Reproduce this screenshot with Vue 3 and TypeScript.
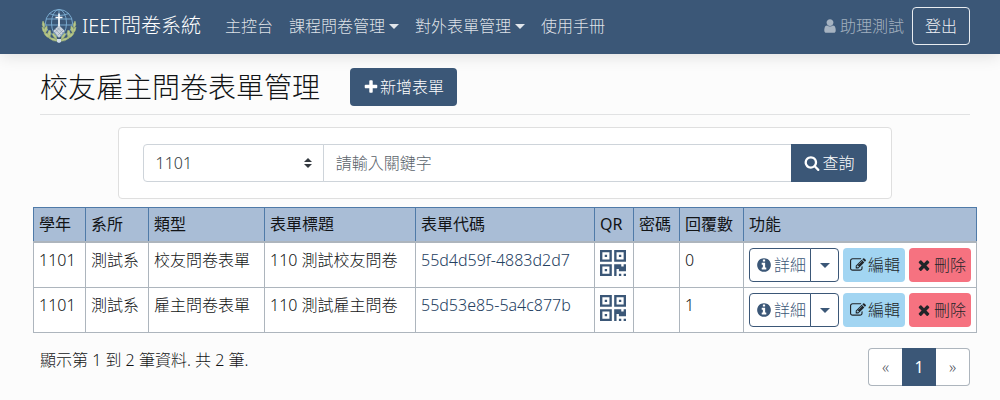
<script setup lang="ts">
import { ref } from 'vue'

interface FormRow {
  year: string
  dept: string
  kind: string
  title: string
  code: string
  replies: number
}

const icons = {
  user: 'M1536 1399q0 109-62.5 187t-150.5 78h-854q-88 0-150.5-78t-62.5-187q0-85 8.5-160.5t31.5-152 58.5-131 94-89 134.5-34.5q131 128 313 128t313-128q76 0 134.5 34.5t94 89 58.5 131 31.5 152 8.5 160.5zm-256-887q0 159-112.5 271.5t-271.5 112.5-271.5-112.5-112.5-271.5 112.5-271.5 271.5-112.5 271.5 112.5 112.5 271.5z',
  plus: 'M1600 736v192q0 40-28 68t-68 28h-416v416q0 40-28 68t-68 28h-192q-40 0-68-28t-28-68v-416h-416q-40 0-68-28t-28-68v-192q0-40 28-68t68-28h416v-416q0-40 28-68t68-28h192q40 0 68 28t28 68v416h416q40 0 68 28t28 68z',
  search: 'M1216 832q0-185-131.5-316.5t-316.5-131.5-316.5 131.5-131.5 316.5 131.5 316.5 316.5 131.5 316.5-131.5 131.5-316.5zm512 832q0 52-38 90t-90 38q-54 0-90-38l-343-342q-179 124-399 124-143 0-273.5-55.5t-225-150-150-225-55.5-273.5 55.5-273.5 150-225 225-150 273.5-55.5 273.5 55.5 225 150 150 225 55.5 273.5q0 220-124 399l343 343q37 37 37 90z',
  info: 'M1152 1376v-160q0-14-9-23t-23-9h-96v-512q0-14-9-23t-23-9h-320q-14 0-23 9t-9 23v160q0 14 9 23t23 9h96v320h-96q-14 0-23 9t-9 23v160q0 14 9 23t23 9h448q14 0 23-9t9-23zm-128-896v-160q0-14-9-23t-23-9h-192q-14 0-23 9t-9 23v160q0 14 9 23t23 9h192q14 0 23-9t9-23zm640 416q0 209-103 385.5t-279.5 279.5-385.5 103-385.5-103-279.5-279.5-103-385.5 103-385.5 279.5-279.5 385.5-103 385.5 103 279.5 279.5 103 385.5z',
  edit: 'M888 1184l116-116-152-152-116 116v56h96v96h56zm440-720q-16-16-33 1l-350 350q-17 17-1 33t33-1l350-350q17-17 1-33zm80 594v190q0 119-84.5 203.5t-203.5 84.5h-832q-119 0-203.5-84.5t-84.5-203.5v-832q0-119 84.5-203.5t203.5-84.5h832q63 0 117 25 15 7 18 23 3 17-9 29l-49 49q-14 14-32 8-23-6-45-6h-832q-66 0-113 47t-47 113v832q0 66 47 113t113 47h832q66 0 113-47t47-113v-126q0-13 9-22l64-64q15-15 35-7t20 29zm-96-738l288 288-672 672h-288v-288zm444 132l-92 92-288-288 92-92q28-28 68-28t68 28l152 152q28 28 28 68t-28 68z',
  times: 'M1490 1322q0 40-28 68l-136 136q-28 28-68 28t-68-28l-294-294-294 294q-28 28-68 28t-68-28l-136-136q-28-28-28-68t28-68l294-294-294-294q-28-28-28-68t28-68l136-136q28-28 68-28t68 28l294 294 294-294q28-28 68-28t68 28l136 136q28 28 28 68t-28 68l-294 294 294 294q28 28 28 68z',
}

const navItems = [
  { label: '主控台', menu: false },
  { label: '課程問卷管理', menu: true },
  { label: '對外表單管理', menu: true },
  { label: '使用手冊', menu: false },
]

const columns = [
  { label: '學年', cls: 'c-year' },
  { label: '系所', cls: 'c-dept' },
  { label: '類型', cls: 'c-kind' },
  { label: '表單標題', cls: 'c-title' },
  { label: '表單代碼', cls: 'c-code' },
  { label: 'QR', cls: 'c-qr' },
  { label: '密碼', cls: 'c-pass' },
  { label: '回覆數', cls: 'c-reply' },
  { label: '功能', cls: 'c-tools' },
]

const rows: FormRow[] = [
  { year: '1101', dept: '測試系', kind: '校友問卷表單', title: '110 測試校友問卷', code: '55d4d59f-4883d2d7', replies: 0 },
  { year: '1101', dept: '測試系', kind: '雇主問卷表單', title: '110 測試雇主問卷', code: '55d53e85-5a4c877b', replies: 1 },
]

const year = ref('1101')
const keyword = ref('')
</script>

<template>
  <div class="page">
    <header class="navbar">
      <a class="brand" href="#">
        <svg class="logo" viewBox="0 0 36 36" aria-hidden="true">
          <g fill="none" stroke="#7eb0d6" stroke-width="0.9">
            <circle cx="18" cy="15" r="13.5" />
            <ellipse cx="18" cy="15" rx="7.5" ry="13.5" />
            <path d="M18 1.5v27M5 11h26M4.5 17h27M8 5.500q10 4 20 0" />
          </g>
          <g fill="#b8c88a" stroke="#a3b57a" stroke-width="0.6">
            <path d="M2 13q-2 4 1 7q2-3-1-7zM1 19q0 5 4 7q0-5-4-7zM3 25q2 5 7 5q-2-5-7-5zM8 30q4 4 9 3q-4-4-9-3zM6 18q-4 2-2 7q3-2 2-7zM9 22q-4 3-1 7q3-2 1-7zM12 25q-2 2 4 7q0-4-4-7z" />
            <path transform="matrix(-1 0 0 1 36 0)" d="M2 13q-2 4 1 7q2-3-1-7zM1 19q0 5 4 7q0-5-4-7zM3 25q2 5 7 5q-2-5-7-5zM8 30q4 4 9 3q-4-4-9-3zM6 18q-4 2-2 7q3-2 2-7zM9 22q-4 3-1 7q3-2 1-7zM12 25q-2 2 4 7q0-4-4-7z" />
          </g>
          <path d="M18 17l6 6-6 7-6-7z" fill="#c9d2dc" stroke="#4b6482" stroke-width="0.4" />
          <path d="M14 21l6 6M16 19.500l6 5.500M14 24.500l5-5M17 27l5-5" stroke="#7d90a6" stroke-width="0.5" />
          <path d="M18 5.500v12.500M14.500 9.500h7" stroke="#fff" stroke-width="1.600" />
          <path d="M16 31h4v3l-2 1-2-1z" fill="#cfdce8" />
        </svg>
        <span>IEET問卷系統</span>
      </a>
      <nav class="menu">
        <a v-for="item in navItems" :key="item.label" class="nav-link" href="#">
          {{ item.label }}<i v-if="item.menu" class="caret"></i>
        </a>
      </nav>
      <span class="account">
        <svg class="icon" viewBox="0 0 1792 1792" aria-hidden="true"><path :d="icons.user" /></svg>
        助理測試
      </span>
      <button class="btn logout" type="button">登出</button>
    </header>

    <main class="content">
      <div class="heading">
        <h1>校友雇主問卷表單管理</h1>
        <button class="btn primary" type="button">
          <svg class="icon" viewBox="0 0 1792 1792" aria-hidden="true"><path :d="icons.plus" /></svg>
          新增表單
        </button>
      </div>

      <form class="search" @submit.prevent>
        <div class="select-wrap">
          <select v-model="year" aria-label="學年">
            <option value="1101">1101</option>
          </select>
          <svg class="arrows" viewBox="0 0 8 10" aria-hidden="true"><path d="M4 0L0 4h8zM4 10L0 6h8z" /></svg>
        </div>
        <input v-model="keyword" type="text" placeholder="請輸入關鍵字" aria-label="關鍵字" />
        <button class="btn primary submit" type="submit">
          <svg class="icon" viewBox="0 0 1792 1792" aria-hidden="true"><path :d="icons.search" /></svg>
          查詢
        </button>
      </form>

      <table class="forms">
        <thead>
          <tr>
            <th v-for="col in columns" :key="col.label" :class="col.cls" scope="col">{{ col.label }}</th>
          </tr>
        </thead>
        <tbody>
          <tr v-for="row in rows" :key="row.code">
            <td>{{ row.year }}</td>
            <td>{{ row.dept }}</td>
            <td>{{ row.kind }}</td>
            <td>{{ row.title }}</td>
            <td><a class="code" href="#">{{ row.code }}</a></td>
            <td>
              <a class="qr-link" href="#" aria-label="QR">
                <svg class="qr" viewBox="0 0 11 11" aria-hidden="true">
                  <path fill-rule="evenodd" d="M0 0h5v5H0zM1 1v3h3V1zM6 0h5v5H6zM7 1v3h3V1zM0 6h5v5H0zM1 7v3h3V7z" />
                  <path d="M2 2h1v1H2zM8 2h1v1H8zM2 8h1v1H2zM6 6h3v1h1V6h1v3H8V8H7v3H6zM8 10h1v1H8zM10 10h1v1h-1z" />
                </svg>
              </a>
            </td>
            <td></td>
            <td>{{ row.replies }}</td>
            <td>
              <div class="tools">
                <div class="split">
                  <button class="btn small detail" type="button">
                    <svg class="icon" viewBox="0 0 1792 1792" aria-hidden="true"><path :d="icons.info" /></svg>
                    詳細
                  </button>
                  <button class="btn small toggle" type="button" aria-label="更多"><i class="caret"></i></button>
                </div>
                <button class="btn small edit" type="button">
                  <svg class="icon" viewBox="0 0 1792 1792" aria-hidden="true"><path :d="icons.edit" /></svg>
                  編輯
                </button>
                <button class="btn small remove" type="button">
                  <svg class="icon" viewBox="0 0 1792 1792" aria-hidden="true"><path :d="icons.times" /></svg>
                  刪除
                </button>
              </div>
            </td>
          </tr>
        </tbody>
      </table>

      <footer class="summary">
        <span>顯示第 1 到 2 筆資料. 共 2 筆.</span>
        <nav class="pager" aria-label="分頁">
          <a href="#">«</a>
          <a class="active" href="#" aria-current="page">1</a>
          <a href="#">»</a>
        </nav>
      </footer>
    </main>
  </div>
</template>

<style>
body {
  background: #fcfcfc;
}
</style>

<style scoped>
.page,
.page * {
  box-sizing: border-box;
}
.page {
  font: 300 16px/24px "Noto Sans", "Noto Sans CJK TC", sans-serif;
  color: #121416;
}
a {
  color: inherit;
  text-decoration: none;
}
button,
input,
select {
  font: inherit;
  color: inherit;
  margin: 0;
}
.icon {
  width: 16px;
  height: 16px;
  flex: none;
  fill: currentColor;
}
.caret {
  display: inline-block;
  border: 5px solid transparent;
  border-top-color: currentColor;
  border-bottom: 0;
}
.btn {
  display: inline-flex;
  align-items: center;
  justify-content: center;
  gap: 1px;
  height: 38px;
  padding: 0 12px;
  border: 1px solid transparent;
  border-radius: 4px;
  white-space: nowrap;
  cursor: pointer;
}
.primary {
  background: #3b5777;
  color: #fff;
}

.navbar {
  display: flex;
  align-items: center;
  min-height: 54px;
  padding: 7px 30px 9px 41px;
  background: #3b5777;
  color: rgba(255, 255, 255, 0.85);
  box-shadow: 0 2px 16px rgba(0, 0, 0, 0.12);
}
.brand {
  display: flex;
  align-items: center;
  gap: 5px;
  margin-right: 16px;
  font-size: 20px;
  color: #fff;
  white-space: nowrap;
}
.logo {
  width: 36px;
  height: 36px;
}
.menu {
  display: flex;
  flex: 1;
}
.nav-link {
  display: flex;
  align-items: center;
  gap: 4px;
  padding: 0 8px;
  white-space: nowrap;
}
.account {
  display: flex;
  align-items: center;
  gap: 2px;
  margin-right: 8px;
  color: rgba(255, 255, 255, 0.55);
  white-space: nowrap;
}
.logout {
  background: transparent;
  border-color: #e8ecf0;
  color: #f0f2f5;
}

.content {
  padding: 14px 30px 0 40px;
}
.heading {
  display: flex;
  align-items: center;
  gap: 30px;
  padding-bottom: 8px;
  border-bottom: 1px solid #e1e2e3;
}
h1 {
  margin: 0;
  font-size: 28px;
  line-height: 34px;
  font-weight: 300;
}

.search {
  display: flex;
  width: 83.333%;
  margin: 12px auto 8px;
  padding: 16px 24px;
  background: #fff;
  border: 1px solid #dfdfdf;
  border-radius: 4px;
}
.select-wrap {
  position: relative;
  flex: 0 0 25%;
}
.select-wrap select {
  appearance: none;
  width: 100%;
  height: 38px;
  padding: 0 12px;
  border: 1px solid #ced4da;
  border-radius: 4px 0 0 4px;
  background: #fff;
  color: #343a40;
}
.arrows {
  position: absolute;
  right: 12px;
  top: 14px;
  width: 8px;
  height: 10px;
  fill: #343a40;
}
.search input {
  flex: 1;
  min-width: 0;
  height: 38px;
  margin-left: -1px;
  padding: 0 12px;
  border: 1px solid #ced4da;
  border-right: 0;
  border-radius: 0;
  background: #fff;
}
.search input::placeholder {
  color: #5a636b;
  opacity: 1;
}
.submit {
  gap: 2px;
  border-radius: 0 4px 4px 0;
}

.forms {
  width: calc(100% + 14px);
  margin: 0 -7px;
  table-layout: fixed;
  border-collapse: collapse;
  background: #fff;
}
.forms th,
.forms td {
  padding: 5px;
  text-align: left;
  vertical-align: top;
  white-space: nowrap;
  border: 1px solid #adb5bd;
}
.forms th {
  padding-top: 4px;
  font-weight: 400;
  background: #a9bdd6;
  border-color: #4f7aa8;
  border-bottom: 2px solid #adb5bd;
}
.c-year { width: 52px; }
.c-dept { width: 63px; }
.c-kind { width: 116px; }
.c-title { width: 151px; }
.c-code { width: 179px; }
.c-qr { width: 39px; }
.c-pass { width: 46px; }
.c-reply { width: 64px; }
.c-tools { width: 233px; }
.code {
  color: #24405f;
}
.qr-link {
  color: #3b5777;
}
.qr {
  display: block;
  width: 26px;
  height: 26px;
  margin-top: 2px;
  fill: currentColor;
}
.tools {
  display: flex;
  gap: 4px;
}
.split {
  display: flex;
}
.small {
  gap: 2px;
  height: 34px;
  padding: 0 4px 0 6px;
}
.detail,
.toggle {
  background: #fff;
  border-color: #3b5777;
  color: #3b5777;
}
.detail {
  border-radius: 4px 0 0 4px;
}
.toggle {
  width: 29px;
  margin-left: -1px;
  padding: 0;
  border-radius: 0 4px 4px 0;
}
.edit {
  background: #a2d5f2;
  color: #212529;
}
.remove {
  background: #f67280;
  color: #212529;
}

.summary {
  display: flex;
  justify-content: space-between;
  align-items: flex-start;
  padding-top: 15px;
}
.pager {
  display: flex;
}
.pager a {
  min-width: 34px;
  padding: 6px 0;
  background: #fff;
  border: 1px solid #adb5bd;
  color: #495057;
  text-align: center;
}
.pager a:first-child {
  border-right: 0;
  border-radius: 4px 0 0 4px;
}
.pager a:last-child {
  border-left: 0;
  border-radius: 0 4px 4px 0;
}
.pager .active {
  background: #3b5777;
  border-color: #3b5777;
  color: #fff;
  font-weight: 400;
}
</style>
